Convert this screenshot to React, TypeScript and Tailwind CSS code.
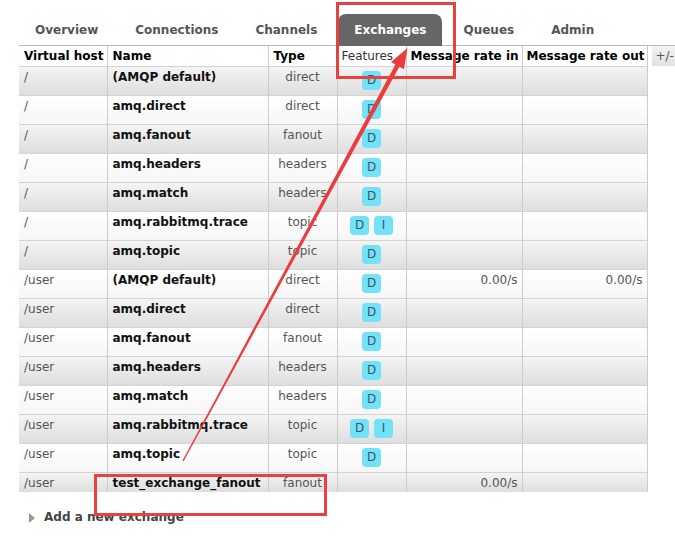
import React from "react";

type Row = { vhost: string; name: string; type: string; feats: string[]; rin?: string; rout?: string };

const rows: Row[] = [
  { vhost: "/", name: "(AMQP default)", type: "direct", feats: ["D"] },
  { vhost: "/", name: "amq.direct", type: "direct", feats: ["D"] },
  { vhost: "/", name: "amq.fanout", type: "fanout", feats: ["D"] },
  { vhost: "/", name: "amq.headers", type: "headers", feats: ["D"] },
  { vhost: "/", name: "amq.match", type: "headers", feats: ["D"] },
  { vhost: "/", name: "amq.rabbitmq.trace", type: "topic", feats: ["D", "I"] },
  { vhost: "/", name: "amq.topic", type: "topic", feats: ["D"] },
  { vhost: "/user", name: "(AMQP default)", type: "direct", feats: ["D"], rin: "0.00/s", rout: "0.00/s" },
  { vhost: "/user", name: "amq.direct", type: "direct", feats: ["D"] },
  { vhost: "/user", name: "amq.fanout", type: "fanout", feats: ["D"] },
  { vhost: "/user", name: "amq.headers", type: "headers", feats: ["D"] },
  { vhost: "/user", name: "amq.match", type: "headers", feats: ["D"] },
  { vhost: "/user", name: "amq.rabbitmq.trace", type: "topic", feats: ["D", "I"] },
  { vhost: "/user", name: "amq.topic", type: "topic", feats: ["D"] },
  { vhost: "/user", name: "test_exchange_fanout", type: "fanout", feats: [], rin: "0.00/s" },
];

const tabs = ["Overview", "Connections", "Channels", "Exchanges", "Queues", "Admin"];

// Annotation overlay: red boxes and the tapering arrow
function Marks() {
  return (
    <svg className="pointer-events-none absolute inset-0" width="675" height="538" viewBox="0 0 675 538">
      <rect x="337.5" y="3.5" width="117" height="74" fill="none" stroke="#e8413f" strokeWidth="3" />
      <rect x="95.5" y="475.5" width="230" height="39" fill="none" stroke="#e8413f" strokeWidth="3" />
      <polygon
        fill="#ea3c3c"
        points="183.6,461.3 399.3,66.8 404,69.3 407.5,48 391,62 395.4,64.4 182.4,460.7"
      />
    </svg>
  );
}

export default function App() {
  return (
    <div
      className="relative h-[538px] w-[675px] overflow-hidden bg-white text-[12px] leading-[15px] text-[#555]"
      style={{ fontFamily: '"DejaVu Sans", Verdana, sans-serif' }}
    >
      {/* Tabs */}
      <div className="ml-[19px] mt-[14px] flex h-[32px] gap-[5px] border-b border-[#bbb]">
        {tabs.map((t) => (
          <div
            key={t}
            className={
              t === "Exchanges"
                ? "flex h-[32px] items-center rounded-t-[8px] bg-[#666] px-[16px] pt-px font-bold text-white"
                : "flex h-[32px] items-center px-[16px] pt-px font-bold text-[#555]"
            }
          >
            {t}
          </div>
        ))}
      </div>

      {/* Table */}
      <div className="ml-[19px] flex items-start gap-[4px]">
        <table className="w-[628px] table-fixed border-collapse">
          <colgroup>
            <col className="w-[88px]" />
            <col className="w-[161px]" />
            <col className="w-[69px]" />
            <col className="w-[69px]" />
            <col className="w-[116px]" />
            <col className="w-[125px]" />
          </colgroup>
          <thead>
            <tr className="h-[20px] whitespace-nowrap text-left text-black">
              <th className="border-r border-[#ccc] px-[5px] pt-px font-bold">Virtual host</th>
              <th className="border-r border-[#ccc] px-[5px] pt-px font-bold">Name</th>
              <th className="border-r border-[#ccc] px-[5px] pt-px font-bold">Type</th>
              <th className="border-r border-[#ccc] px-[4px] pt-px font-normal text-[#333]">Features</th>
              <th className="border-r border-[#ccc] px-[4px] pt-px font-bold">Message rate in</th>
              <th className="border-r border-[#ccc] px-[4px] pt-px font-bold">Message rate out</th>
            </tr>
          </thead>
          <tbody>
            {rows.map((r, i) => (
              <tr
                key={i}
                className={
                  (i % 2 === 0
                    ? "bg-gradient-to-b from-[#f4f4f4] to-[#dedede]"
                    : "bg-gradient-to-b from-white to-[#f6f6f6]") +
                  " border-t border-[#d4d4d4] " +
                  (r.feats.length ? "h-[29px]" : "h-[20px]")
                }
              >
                <td className="border-r border-[#ccc] px-[5px] pt-[3px] align-top">{r.vhost}</td>
                <td className="whitespace-nowrap border-r border-[#ccc] px-[5px] pt-[3px] align-top font-bold text-[#111]">
                  {r.name}
                </td>
                <td className="border-r border-[#ccc] px-[4px] pt-[3px] text-center align-top">{r.type}</td>
                <td className="border-r border-[#ccc] px-[4px] pt-[4px] align-top">
                  <div className="flex justify-center gap-[5px]">
                    {r.feats.map((f) => (
                      <span
                        key={f}
                        className="flex h-[19px] w-[19px] items-center justify-center rounded-[4px] bg-[#72e2f8] text-[#456]"
                      >
                        {f}
                      </span>
                    ))}
                  </div>
                </td>
                <td className="border-r border-[#ccc] px-[4px] pt-[3px] text-right align-top">{r.rin}</td>
                <td className="border-r border-[#ccc] px-[4px] pt-[3px] text-right align-top">{r.rout}</td>
              </tr>
            ))}
          </tbody>
        </table>
        <div className="flex h-[20px] w-[30px] items-center bg-gradient-to-b from-[#f2f2f2] to-[#e2e2e2] pl-[4px] text-[#555]">
          +/-
        </div>
      </div>

      {/* Add a new exchange */}
      <div className="ml-[29px] mt-[18px] flex items-center gap-[9px] font-bold text-[#444]">
        <svg width="6" height="10" viewBox="0 0 6 10">
          <polygon points="0,0 6,5 0,10" fill="#999" />
        </svg>
        <span>Add a new exchange</span>
      </div>

      <Marks />
    </div>
  );
}
